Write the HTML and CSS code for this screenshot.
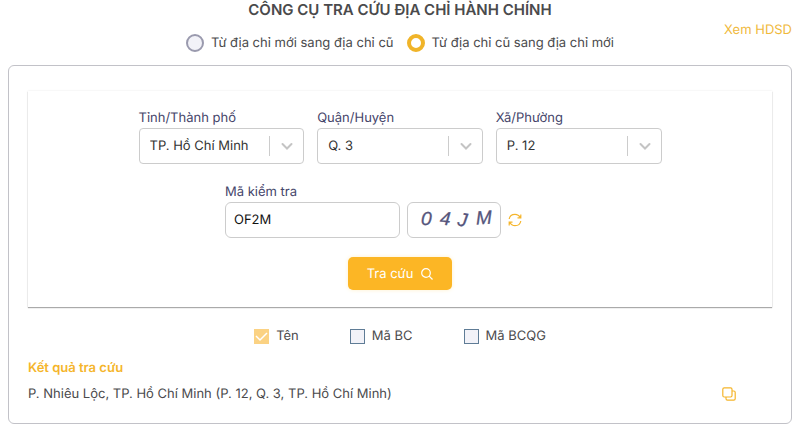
FILE: index.html
```
<!DOCTYPE html>
<html lang="vi">
<head>
    <meta charset="UTF-8">
    <meta name="viewport" content="width=device-width, initial-scale=1">
    <title>Công cụ tra cứu địa chỉ hành chính</title>
    <link rel="stylesheet" href="styles.css">
</head>
<body>
    <header class="header">
        <div class="heading">
            <h1>CÔNG CỤ TRA CỨU ĐỊA CHỈ HÀNH CHÍNH</h1>
            <div class="modes">
                <label class="mode"><input type="radio" name="mode"> Từ địa chỉ mới sang địa chỉ cũ</label>
                <label class="mode"><input type="radio" name="mode" checked> Từ địa chỉ cũ sang địa chỉ mới</label>
            </div>
        </div>
        <a class="guide" href="#">Xem HDSD</a>
    </header>

    <main class="panel">
        <form class="card">
            <div class="areas">
                <div class="field">
                    <label for="province">Tỉnh/Thành phố</label>
                    <div class="select">
                        <select id="province"><option>TP. Hồ Chí Minh</option></select>
                        <svg class="arrow" viewBox="0 0 35 20"><path class="bar" d="M.5 0v20"/><path d="M13.500 8l4.500 4.500 4.500-4.500"/></svg>
                    </div>
                </div>
                <div class="field">
                    <label for="district">Quận/Huyện</label>
                    <div class="select">
                        <select id="district"><option>Q. 3</option></select>
                        <svg class="arrow" viewBox="0 0 35 20"><path class="bar" d="M.5 0v20"/><path d="M13.500 8l4.500 4.500 4.500-4.500"/></svg>
                    </div>
                </div>
                <div class="field">
                    <label for="ward">Xã/Phường</label>
                    <div class="select">
                        <select id="ward"><option>P. 12</option></select>
                        <svg class="arrow" viewBox="0 0 35 20"><path class="bar" d="M.5 0v20"/><path d="M13.500 8l4.500 4.500 4.500-4.500"/></svg>
                    </div>
                </div>
            </div>

            <div class="verify">
                <div class="field code">
                    <label for="code">Mã kiểm tra</label>
                    <input type="text" id="code" value="OF2M">
                </div>
                <svg class="captcha" viewBox="0 0 92 34" role="img" aria-label="Captcha">
                    <text x="13" y="22" transform="rotate(3 18 16)">0</text>
                    <text x="32" y="22" transform="rotate(5 37 16)">4</text>
                    <text x="50" y="23" transform="rotate(8 54 16)">J</text>
                    <text x="68" y="21" transform="rotate(-3 76 16)">M</text>
                </svg>
                <button type="button" class="icon-button refresh" aria-label="Đổi mã">
                    <svg viewBox="0 0 14 14" width="14" height="14">
                        <path d="M1.200 6C1.700 3 4.200 1.300 7 1.300c2.300 0 4.200 1.200 5.500 3.400M12.800 1.500v3.300H9.500M12.800 8c-.5 3-3 4.700-5.800 4.700-2.300 0-4.200-1.200-5.500-3.400M1.200 12.500V9.200h3.300"/>
                    </svg>
                </button>
            </div>

            <button type="button" class="submit">
                Tra cứu
                <svg viewBox="0 0 12 12" width="12" height="12"><circle cx="5" cy="5" r="4.300"/><path d="M8.200 8.200l3.300 3.300"/></svg>
            </button>
        </form>

        <div class="options">
            <label class="option"><input type="checkbox" checked disabled> Tên</label>
            <label class="option"><input type="checkbox"> Mã BC</label>
            <label class="option"><input type="checkbox"> Mã BCQG</label>
        </div>

        <h2>Kết quả tra cứu</h2>
        <div class="result">
            <p>P. Nhiêu Lộc, TP. Hồ Chí Minh (P. 12, Q. 3, TP. Hồ Chí Minh)</p>
            <button type="button" class="icon-button" aria-label="Sao chép">
                <svg viewBox="0 0 14 14" width="14" height="14">
                    <rect x=".8" y=".8" width="9.200" height="9.200" rx="1.400"/>
                    <path d="M10 4h1.800c.8 0 1.400.6 1.400 1.400v6.400c0 .8-.6 1.400-1.400 1.400H5.400c-.8 0-1.400-.6-1.400-1.400V10"/>
                </svg>
            </button>
        </div>
    </main>
</body>
</html>
```

FILE: styles.css
```
* {
    margin: 0;
    padding: 0;
    box-sizing: border-box;
}

body {
    padding: 0 8px;
    background: #fff;
    color: #4a4a4c;
    font: 13px/20px Inter, sans-serif;
    text-rendering: geometricPrecision;
}

input, select, button {
    font: inherit;
    text-rendering: inherit;
}

svg {
    fill: none;
    stroke: currentColor;
    stroke-width: 1.2;
}

.header {
    display: grid;
    grid-template-columns: 1fr auto 1fr;
    align-items: center;
    height: 65px;
}

.heading {
    grid-column: 2;
    padding-bottom: 13px;
    text-align: center;
}

h1 {
    font-size: 15px;
    line-height: 20px;
    font-weight: 600;
}

.modes {
    display: flex;
    justify-content: center;
    gap: 13px;
    margin-top: 13px;
}

.mode {
    display: flex;
    align-items: center;
    gap: 7px;
}

.mode input {
    appearance: none;
    width: 18px;
    height: 18px;
    border: 2px solid #9a9aae;
    border-radius: 50%;
    background: #f2f2f8;
}

.mode input:checked {
    border: 4px solid #f0b429;
    background: #fff;
}

.guide {
    justify-self: end;
    padding-bottom: 6px;
    color: #f0b93c;
    text-decoration: none;
}

.panel {
    padding: 25px 19px 19px;
    border: 1px solid #c2c2c8;
    border-radius: 6px;
}

.card {
    display: flex;
    flex-direction: column;
    align-items: center;
    padding: 18px 16px 17px;
    box-shadow: 0 1px 1px #aaa, 0 0 2px #e8e8e8;
}

.field {
    color: #45456a;
}

.field label {
    display: block;
    line-height: 19px;
}

.areas {
    display: flex;
    gap: 13px;
    width: 100%;
    max-width: 523px;
}

.areas .field {
    flex: 1;
}

.select {
    position: relative;
}

.select select {
    appearance: none;
    display: block;
    width: 100%;
    height: 36px;
    padding: 0 36px 0 10px;
    border: 1px solid #ccc;
    border-radius: 4px;
    background: #fff;
    color: #333;
}

.arrow {
    position: absolute;
    top: 8px;
    right: 0;
    width: 35px;
    height: 20px;
    color: #c4c4c4;
    stroke-width: 2;
    stroke-linecap: round;
    pointer-events: none;
}

.arrow .bar {
    stroke: #ccc;
    stroke-width: 1;
    stroke-linecap: butt;
}

.verify {
    display: flex;
    align-items: flex-end;
    gap: 7px;
    width: 350px;
    margin-top: 19px;
}

.code {
    width: 175px;
}

.code input {
    display: block;
    width: 100%;
    height: 36px;
    padding: 0 8px;
    border: 1px solid #ccc;
    border-radius: 6px;
    color: #111;
}

.captcha {
    width: 94px;
    height: 36px;
    border: 1px solid #ccc;
    border-radius: 6px;
}

.captcha text {
    fill: #55557c;
    stroke: #55557c;
    stroke-width: .3;
    font: italic 400 19px "Liberation Sans", sans-serif;
}

.icon-button {
    display: flex;
    border: 0;
    background: none;
    color: #f5b52b;
    cursor: pointer;
}

.refresh {
    padding-bottom: 11px;
}

.submit {
    display: flex;
    align-items: center;
    justify-content: center;
    gap: 8px;
    width: 104px;
    height: 33px;
    margin-top: 19px;
    border: 0;
    border-radius: 5px;
    background: #fcb625;
    box-shadow: 0 0 4px #fff0cc;
    color: #fff;
    cursor: pointer;
}

.options {
    display: flex;
    justify-content: center;
    gap: 51px;
    margin-top: 19px;
}

.option {
    display: flex;
    align-items: center;
    gap: 7px;
}

.option input {
    appearance: none;
    width: 15px;
    height: 15px;
    border: 1px solid #5f7c96;
    background: #f2f2f8;
}

.option input:checked {
    border: 0;
    background: #fbd283 url("data:image/svg+xml,%3Csvg xmlns='http://www.w3.org/2000/svg' viewBox='0 0 15 15'%3E%3Cpath d='M2 7l4 4 7-7' fill='none' stroke='white' stroke-width='1.500'/%3E%3C/svg%3E");
}

h2 {
    margin-top: 12px;
    color: #f5b52b;
    font-size: 13px;
    line-height: 20px;
    font-weight: 600;
}

.result {
    display: flex;
    align-items: center;
    justify-content: space-between;
    margin-top: 6px;
    padding-right: 36px;
}
```
